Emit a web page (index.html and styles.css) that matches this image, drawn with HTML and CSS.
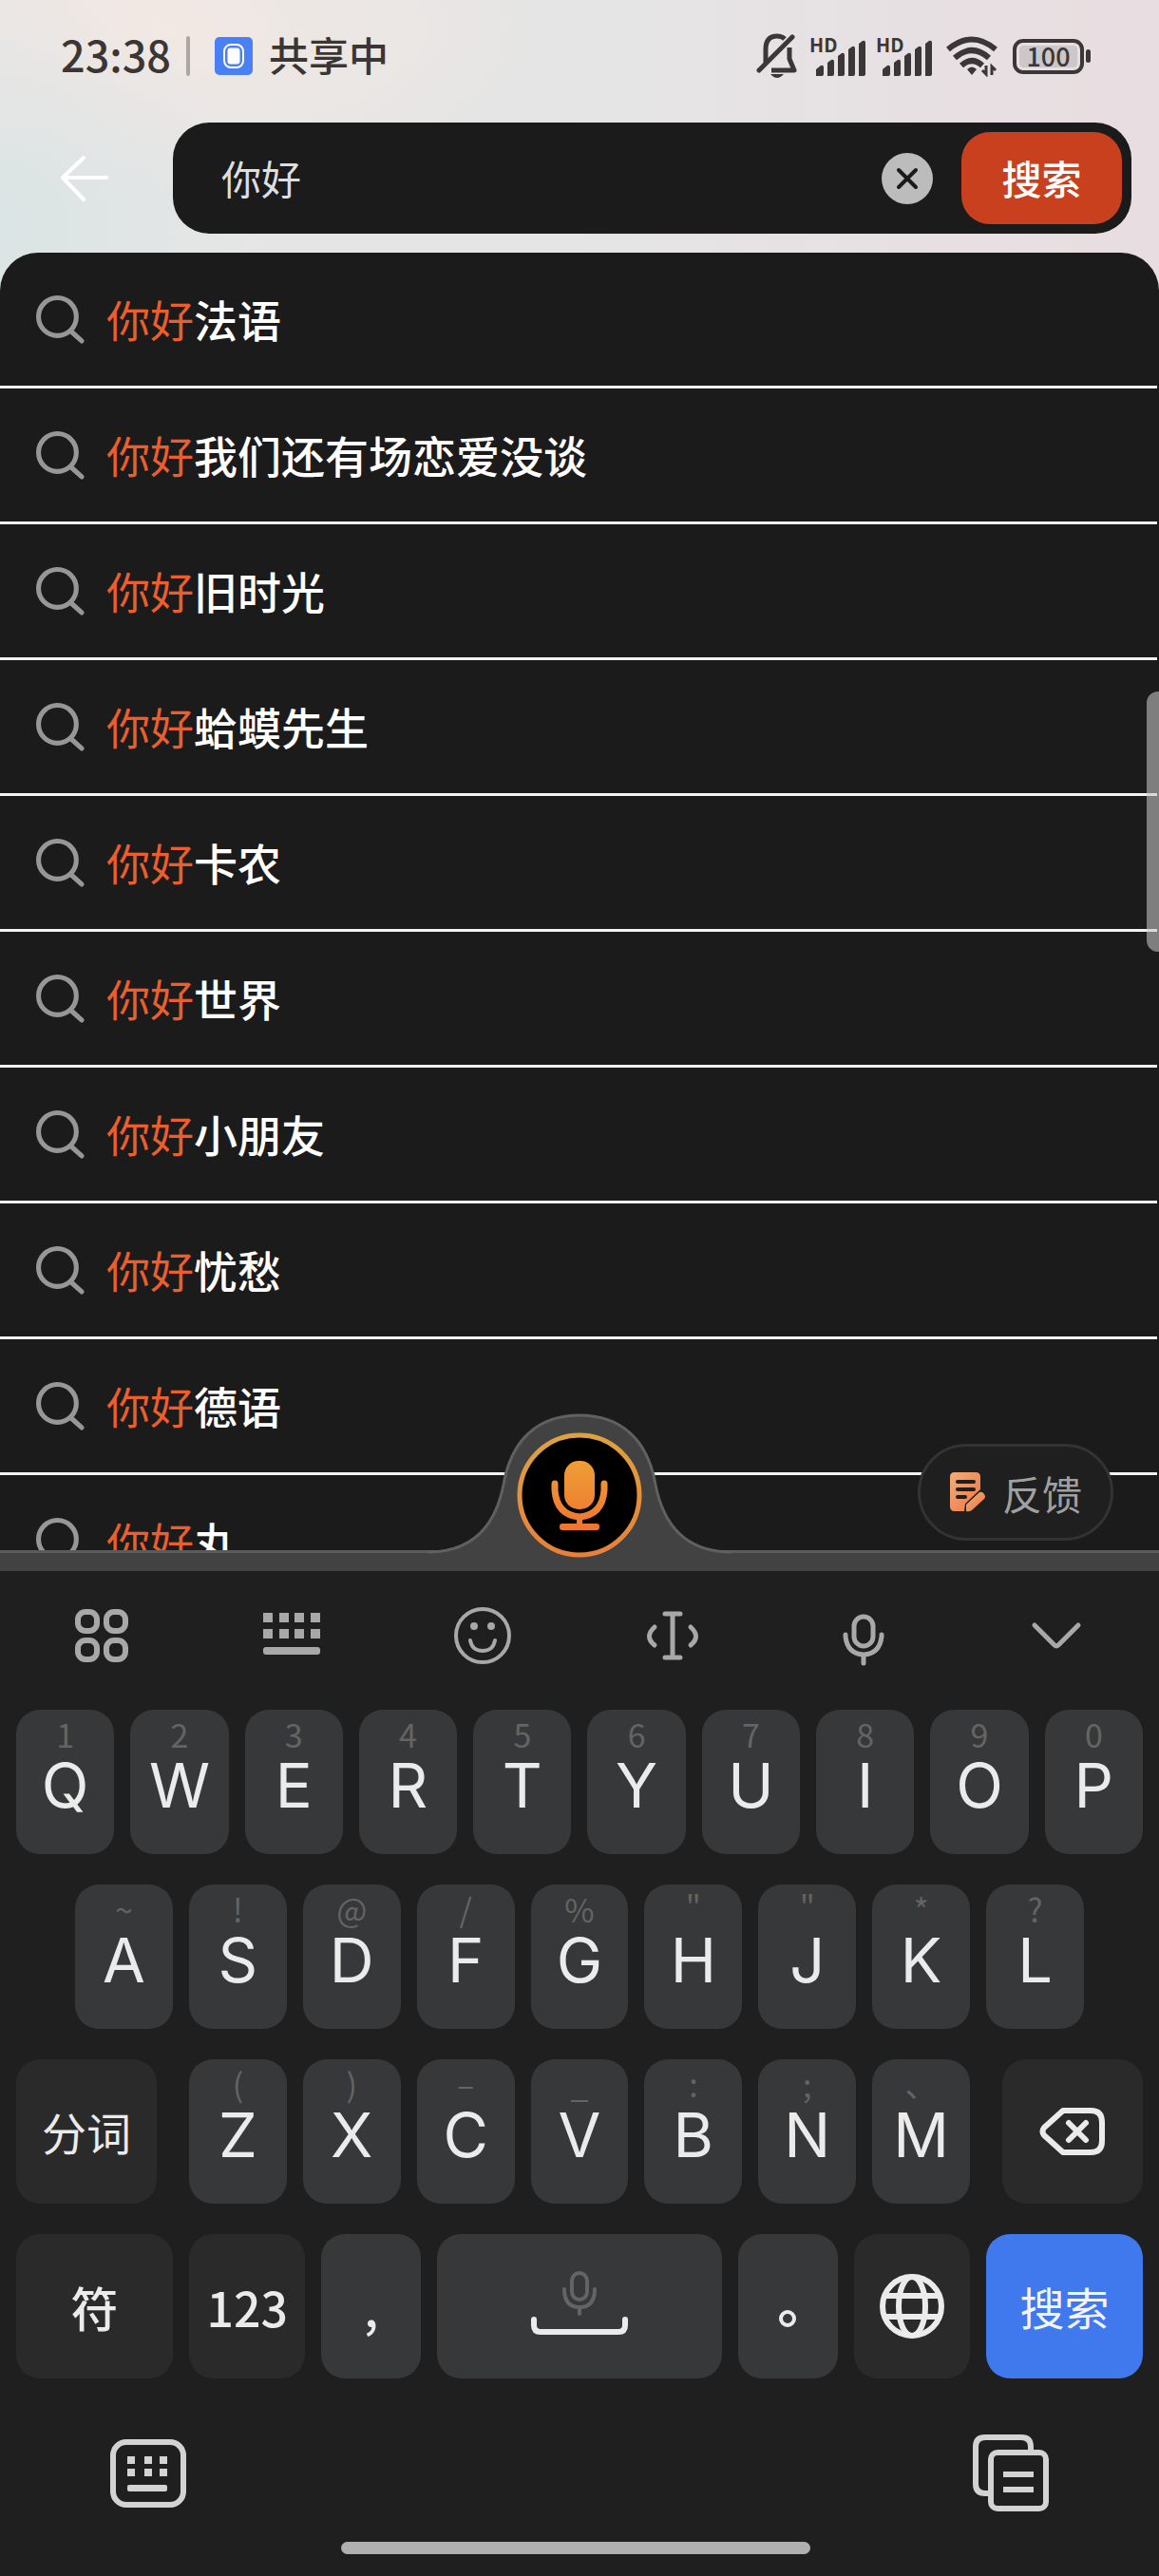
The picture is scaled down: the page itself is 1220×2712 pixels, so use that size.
FILE: index.html
```html
<!DOCTYPE html>
<html lang="zh-CN">
<head>
<meta charset="utf-8">
<meta name="viewport" content="width=device-width, initial-scale=1">
<title>搜索</title>
<link rel="stylesheet" href="styles.css">
</head>
<body>
<svg class="defs" aria-hidden="true">
  <defs>
    <symbol id="i-search" viewBox="0 0 50 50"><circle cx="22" cy="22" r="19.500" /><path d="M36 37l11 10"/></symbol>
    <symbol id="i-signal" viewBox="0 0 60 44">
      <path d="M7 43v-7l5-4q3-1 3 2v7q0 2-2 2zM19 43V29l4-3q3-1 3 2v13q0 2-2 2zM30 43V22l4-3q3-1 3 2v20q0 2-2 2zM41 43V15l4-3q3-1 3 2v27q0 2-2 2zM52 43V9l4-3q3-1 3 2v33q0 2-2 2z"/>
    </symbol>
    <linearGradient id="g-orange" x1="0" y1="0" x2="0" y2="1"><stop offset="0" stop-color="#dda23e"/><stop offset="1" stop-color="#e8803a"/></linearGradient>
    <linearGradient id="g-mic" gradientUnits="userSpaceOnUse" x1="0" y1="50" x2="0" y2="125"><stop offset="0" stop-color="#ee9f35"/><stop offset="1" stop-color="#ee7230"/></linearGradient>
    <linearGradient id="g-note" x1="0" y1="0" x2="1" y2="1"><stop offset="0" stop-color="#f2ae7a"/><stop offset="1" stop-color="#ee7440"/></linearGradient>
  </defs>
</svg>

<header class="status">
  <time class="clock">23:38</time>
  <span class="status-sep"></span>
  <svg class="share-icon" viewBox="0 0 40 40"><rect width="40" height="40" rx="5" fill="#4a80f5"/><rect x="10" y="8" width="20" height="24" rx="7" fill="none" stroke="#fff" stroke-width="2"/><rect x="13.500" y="11.500" width="13" height="17" rx="3" fill="#fff"/></svg>
  <span class="share-text">共享中</span>
  <div class="status-icons">
    <svg class="bell" viewBox="0 0 44 48"><path d="M10 31V17q0-14 12-14 5 0 8 3M35 15v12l5 12H16" fill="none" stroke="currentColor" stroke-width="5" stroke-linejoin="round"/><path d="M3 39L38 4" stroke="currentColor" stroke-width="5" stroke-linecap="round"/><path d="M15 43h14q-7 8-14 0z" fill="currentColor"/></svg>
    <span class="signal"><b>HD</b><svg viewBox="0 0 60 44"><use href="#i-signal"/></svg></span>
    <span class="signal"><b>HD</b><svg viewBox="0 0 60 44"><use href="#i-signal"/></svg></span>
    <svg class="wifi" viewBox="0 0 54 44"><g fill="none" stroke="currentColor" stroke-width="6"><path d="M2 15Q27-6 52 15"/><path d="M9 24Q27 8 45 24"/><path d="M16 32Q27 22 38 32"/></g><path d="M27 42l-5-6q5-5 10 0z" fill="currentColor"/><path d="M42 32v9l-4-4M48 42v-9l4 4" fill="none" stroke="currentColor" stroke-width="3"/></svg>
    <span class="battery"><span class="battery-body">100</span><span class="battery-tip"></span></span>
  </div>
</header>

<form class="searchbar" onsubmit="return false">
  <button class="back" type="button" aria-label="返回"><svg viewBox="0 0 50 50"><path d="M24 3L2 24l22 23M2 24h46"/></svg></button>
  <div class="field">
    <input class="query" type="text" value="你好" aria-label="搜索内容">
    <button class="clear" type="button" aria-label="清除"><svg viewBox="0 0 54 54"><path d="M18 18l18 18M36 18L18 36"/></svg></button>
    <button class="submit" type="submit">搜索</button>
  </div>
</form>

<main class="results">
  <ul class="list">
    <li><a href="#"><svg><use href="#i-search"/></svg><span><em>你好</em>法语</span></a></li>
    <li><a href="#"><svg><use href="#i-search"/></svg><span><em>你好</em>我们还有场恋爱没谈</span></a></li>
    <li><a href="#"><svg><use href="#i-search"/></svg><span><em>你好</em>旧时光</span></a></li>
    <li><a href="#"><svg><use href="#i-search"/></svg><span><em>你好</em>蛤蟆先生</span></a></li>
    <li><a href="#"><svg><use href="#i-search"/></svg><span><em>你好</em>卡农</span></a></li>
    <li><a href="#"><svg><use href="#i-search"/></svg><span><em>你好</em>世界</span></a></li>
    <li><a href="#"><svg><use href="#i-search"/></svg><span><em>你好</em>小朋友</span></a></li>
    <li><a href="#"><svg><use href="#i-search"/></svg><span><em>你好</em>忧愁</span></a></li>
    <li><a href="#"><svg><use href="#i-search"/></svg><span><em>你好</em>德语</span></a></li>
    <li><a href="#"><svg><use href="#i-search"/></svg><span><em>你好</em>丸</span></a></li>
  </ul>
  <span class="scroll-thumb"></span>
  <button class="feedback" type="button">
    <svg viewBox="0 0 40 44"><path d="M6 1h22q5 0 5 5v13L17 34l-1 8H6q-5 0-5-5V6q0-5 5-5z" fill="url(#g-note)"/><path d="M9 11h17M9 19h17M9 27h8" stroke="#1f1f1f" stroke-width="4" stroke-linecap="round"/><path d="M18 42v-7l14-13q3-1 5 2 2 3 0 5L24 41q-3 2-6 1z" fill="url(#g-note)"/></svg>
    反馈
  </button>
</main>

<div class="voicebar">
  <button class="voice" type="button" aria-label="语音">
    <svg viewBox="0 0 320 166">
      <path d="M0 146C50 146 72 116 80 75C88 28 116 2 160 2S232 28 240 75C248 116 270 146 320 146V166H0z" fill="#424242"/>
      <path d="M0 146C50 146 72 116 80 75C88 28 116 2 160 2S232 28 240 75C248 116 270 146 320 146" fill="none" stroke="#606060" stroke-width="3"/>
      <circle cx="160" cy="86" r="63" fill="#000" stroke="url(#g-orange)" stroke-width="5"/>
      <rect x="144" y="50" width="32" height="51" rx="15" fill="url(#g-mic)"/>
      <path d="M134 74v7q2 26 26 28 24-2 26-28v-7" fill="none" stroke="url(#g-mic)" stroke-width="7" stroke-linecap="round"/>
      <path d="M157 108h6v8h15q3 0 3 3v1q0 3-3 3h-36q-3 0-3-3v-1q0-3 3-3h15z" fill="url(#g-mic)"/>
    </svg>
  </button>
</div>

<section class="keyboard" aria-label="键盘">
  <div class="tools">
    <button type="button" aria-label="菜单"><svg viewBox="0 0 64 64"><g fill="none" stroke="currentColor" stroke-width="6"><rect x="7" y="7" width="20" height="20" rx="8"/><rect x="37" y="7" width="20" height="20" rx="8"/><rect x="7" y="37" width="20" height="20" rx="8"/><rect x="37" y="37" width="20" height="20" rx="8"/></g></svg></button>
    <button type="button" aria-label="键盘布局"><svg viewBox="0 0 64 64"><path d="M2 13h10M19 13h10M35 13h10M52 13h10M2 30h10M19 30h10M35 30h10M52 30h10" stroke="currentColor" stroke-width="10"/><rect x="2" y="44" width="60" height="8" rx="3" fill="currentColor"/></svg></button>
    <button type="button" aria-label="表情"><svg viewBox="0 0 64 64"><circle cx="32" cy="32" r="28" fill="none" stroke="currentColor" stroke-width="4"/><circle cx="23" cy="22" r="4" fill="currentColor"/><circle cx="41" cy="22" r="4" fill="currentColor"/><path d="M19 37q2 11 13 11t13-11" fill="none" stroke="currentColor" stroke-width="4" stroke-linecap="round"/></svg></button>
    <button type="button" aria-label="光标"><svg viewBox="0 0 64 64"><path d="M24 9h16M24 55h16M32 9v46M13 23q-11 10 0 19M51 23q11 10 0 19" fill="none" stroke="currentColor" stroke-width="5" stroke-linecap="round"/></svg></button>
    <button type="button" aria-label="语音输入"><svg viewBox="0 0 64 64"><rect x="22" y="12" width="20" height="31" rx="10" fill="none" stroke="currentColor" stroke-width="5"/><path d="M13 31v2q2 18 19 19 17-1 19-19v-2M32 52v9" fill="none" stroke="currentColor" stroke-width="5" stroke-linecap="round"/></svg></button>
    <button type="button" aria-label="收起"><svg viewBox="0 0 64 64"><path d="M12 21l21 21q2 2 4 0l21-21" fill="none" stroke="currentColor" stroke-width="5" stroke-linecap="round"/></svg></button>
  </div>

  <div class="keys">
    <div class="row">
      <button class="key"><small>1</small>Q</button><button class="key"><small>2</small>W</button><button class="key"><small>3</small>E</button><button class="key"><small>4</small>R</button><button class="key"><small>5</small>T</button><button class="key"><small>6</small>Y</button><button class="key"><small>7</small>U</button><button class="key"><small>8</small>I</button><button class="key"><small>9</small>O</button><button class="key"><small>0</small>P</button>
    </div>
    <div class="row row-inset">
      <button class="key"><small>~</small>A</button><button class="key"><small>!</small>S</button><button class="key"><small>@</small>D</button><button class="key"><small>/</small>F</button><button class="key"><small>%</small>G</button><button class="key"><small>"</small>H</button><button class="key"><small>"</small>J</button><button class="key"><small>*</small>K</button><button class="key"><small>?</small>L</button>
    </div>
    <div class="row row-wide">
      <button class="key key-side key-dark">分词</button>
      <div class="letters">
        <button class="key"><small>(</small>Z</button><button class="key"><small>)</small>X</button><button class="key"><small>–</small>C</button><button class="key"><small>_</small>V</button><button class="key"><small>:</small>B</button><button class="key"><small>;</small>N</button><button class="key"><small>、</small>M</button>
      </div>
      <button class="key key-side key-dark" aria-label="删除"><svg class="backspace" viewBox="0 0 72 54"><path d="M26 5h29q12 0 12 12v20q0 12-12 12H26L6 31q-3-4 0-8z"/><path d="M32 18l18 18M50 18L32 36"/></svg></button>
    </div>
    <div class="row row-bottom">
      <button class="key key-dark">符</button>
      <button class="key key-dark">123</button>
      <button class="key key-mark">,</button>
      <button class="key key-space" aria-label="空格"><svg viewBox="0 0 104 76"><g fill="none" stroke-linecap="round"><g stroke="#636464" stroke-width="4"><rect x="44" y="3" width="16" height="28" rx="8"/><path d="M36 20q0 19 16 19t16-19M52 39v7"/></g><path d="M4 52v6q0 7 7 7h82q7 0 7-7v-6" stroke="#ebebeb" stroke-width="6"/></g></svg></button>
      <button class="key key-mark" aria-label="句号"><svg class="stop" viewBox="0 0 18 18"><circle cx="9" cy="9" r="7"/></svg></button>
      <button class="key key-dark" aria-label="切换语言"><svg class="globe" viewBox="0 0 68 68"><circle cx="34" cy="34" r="31"/><ellipse cx="34" cy="34" rx="14" ry="31"/><path d="M7 23h54M7 45h54"/></svg></button>
      <button class="key key-enter">搜索</button>
    </div>
  </div>

  <div class="dock">
    <button type="button" aria-label="切换键盘"><svg viewBox="0 0 84 84"><rect x="5" y="9" width="74" height="66" rx="14" fill="none" stroke="currentColor" stroke-width="6"/><path d="M20 28h8M38 28h8M54 28h8M20 41h8M38 41h8M54 41h8" stroke="currentColor" stroke-width="8"/><rect x="20" y="54" width="42" height="7" rx="2" fill="currentColor"/></svg></button>
    <button type="button" aria-label="剪贴板"><svg viewBox="0 0 84 84"><g fill="none" stroke="currentColor" stroke-width="6"><path d="M18 63h-3q-10 0-10-10V14Q5 4 15 4h38q10 0 10 10v4"/><rect x="21" y="20" width="58" height="59" rx="7"/><path d="M34 43h32M34 59h32"/></g></svg></button>
  </div>
  <div class="home"></div>
</section>
</body>
</html>
```
FILE: styles.css
```css
* { box-sizing: border-box; }

body {
  margin: 0;
  height: 100vh;
  display: flex;
  flex-direction: column;
  overflow: hidden;
  color: #fff;
  font-family: "Noto Sans CJK SC", sans-serif;
  background:
    radial-gradient(circle at 0 240px, #dbe4e4 0, rgba(222, 229, 231, 0) 260px),
    radial-gradient(ellipse 420px 170px at 160px 30px, #f2e8e3 0, rgba(242, 232, 227, 0) 100%),
    linear-gradient(90deg, #e5e6e6 0, #e5e5e5 50%, #e7e0e2 80%, #e8dde0 100%);
}

button {
  margin: 0;
  padding: 0;
  border: 0;
  background: none;
  color: inherit;
  font: inherit;
}

svg { display: block; }
.defs { position: absolute; width: 0; height: 0; }

/* Status bar */
.status {
  flex: none;
  display: flex;
  align-items: center;
  height: 118px;
  padding: 0 72px 0 64px;
  color: #3b3633;
}
.clock { font-size: 45px; font-weight: 500; line-height: 60px; padding-bottom: 4px; }
.status-sep { width: 4px; height: 42px; margin: 0 26px 0 16px; border-radius: 2px; background: #aca5a3; }
.share-icon { width: 40px; height: 40px; margin-right: 17px; }
.share-text { font-size: 42px; font-weight: 500; line-height: 60px; padding-bottom: 4px; }
.status-icons { display: flex; align-items: center; margin-left: auto; color: #3b3637; }
.bell { width: 44px; height: 48px; margin-right: 12px; }
.signal { position: relative; width: 60px; height: 44px; margin-right: 10px; }
.signal svg { width: 60px; height: 44px; fill: currentColor; }
.signal b { position: absolute; top: 0; left: 0; font: 600 20px/20px "Noto Sans CJK SC", sans-serif; }
.wifi { width: 54px; height: 44px; margin: 0 16px 0 4px; }
.battery { display: flex; align-items: center; gap: 2px; }
.battery-body {
  width: 75px; height: 37px;
  border: 4px solid #3b3637;
  border-radius: 11px;
  padding: 3px;
  background: #cdc7ca content-box;
  font-size: 27px; font-weight: 500; line-height: 22px;
  text-align: center;
}
.battery-tip { width: 5px; height: 14px; border-radius: 3px; background: #3b3637; }

/* Search bar */
.searchbar {
  flex: none;
  display: flex;
  align-items: center;
  padding: 11px 29px 20px 64px;
}
.back { width: 118px; }
.back svg { width: 50px; height: 54px; fill: none; stroke: #fff; stroke-width: 4; stroke-linecap: round; stroke-linejoin: round; }
.field {
  flex: 1;
  display: flex;
  align-items: center;
  height: 117px;
  padding: 10px;
  border-radius: 38px;
  background: #1b1b1b;
}
.query {
  flex: 1;
  min-width: 0;
  padding: 0 0 2px 41px;
  border: 0;
  outline: 0;
  background: none;
  color: #dedede;
  font: 42px/60px "Noto Sans CJK SC", sans-serif;
}
.clear { width: 54px; height: 54px; margin-right: 30px; border-radius: 50%; background: #bcbcbc; }
.clear svg { fill: none; stroke: #1b1b1b; stroke-width: 4; stroke-linecap: round; }
.submit {
  width: 169px; height: 97px;
  padding-bottom: 2px;
  border-radius: 30px;
  background: #c9401f;
  font-size: 42px; font-weight: 500;
}

/* Suggestions */
.results {
  position: relative;
  flex: 1;
  min-height: 0;
  border-radius: 40px 40px 0 0;
  background: #1b1b1b;
}
.list { height: 100%; margin: 0; padding: 0 2px 0 0; overflow: hidden; list-style: none; }
.list li { height: 143px; border-bottom: 3px solid #f2f2f2; }
.list a {
  display: flex;
  align-items: center;
  gap: 23px;
  height: 100%;
  padding-left: 38px;
  color: #fff;
  font-size: 46px;
  font-weight: 500;
  text-decoration: none;
}
.list span { padding-bottom: 2px; }
.list svg { width: 51px; height: 51px; fill: none; stroke: #979797; stroke-width: 5; stroke-linecap: round; }
.list em { color: #ea5f2c; font-style: normal; font-weight: 400; }
.scroll-thumb {
  position: absolute;
  top: 462px; right: 0;
  width: 13px; height: 274px;
  border-radius: 12px 0 0 12px;
  background: rgba(198, 198, 198, .58);
}
.feedback {
  position: absolute;
  right: 48px; bottom: 10px;
  display: flex;
  align-items: center;
  justify-content: center;
  gap: 16px;
  width: 206px; height: 102px;
  border: 3px solid #333;
  border-radius: 51px;
  background: #1f1f1f;
  color: #a0a0a0;
  font-size: 42px;
}
.feedback svg { width: 40px; height: 44px; }

/* Voice strip above the keyboard */
.voicebar {
  position: relative;
  flex: none;
  height: 22px;
  border-top: 3px solid #5c5c5c;
  background: #424242;
}
.voice { position: absolute; left: 50%; bottom: 0; width: 320px; margin-left: -160px; }
.voice svg { width: 320px; height: 166px; }

/* Keyboard */
.keyboard { flex: none; background: #1f1f1f; }
.tools {
  display: flex;
  justify-content: space-between;
  align-items: center;
  height: 146px;
  padding: 0 79px 10px 75px;
  color: #a8a8a8;
}
.tools svg { width: 64px; height: 64px; }
.keys { display: flex; flex-direction: column; gap: 32px; padding: 0 17px; }
.row { display: flex; gap: 17px; }
.row-inset { padding: 0 62px; }
.row-wide { gap: 34px; }
.row-bottom { display: grid; grid-template-columns: 165fr 122fr 105fr 299fr 105fr 122fr 165fr; }
.letters { flex: 1; display: flex; gap: 17px; }
.key {
  flex: 1 1 0;
  min-width: 0;
  height: 152px;
  display: flex;
  flex-direction: column;
  align-items: center;
  padding-top: 8px;
  border-radius: 25px;
  background: #373839;
  color: #ebebeb;
  font: 400 65px/72px Inter, sans-serif;
}
.key small {
  height: 36px;
  color: #636464;
  font: 34px/36px "Noto Sans CJK SC", sans-serif;
}
.key-side { flex: 0 0 148px; }
.key-dark, .key-enter, .key-mark, .key-space {
  justify-content: center;
  padding: 0;
  font: 500 50px/60px "Noto Sans CJK SC", sans-serif;
}
.key-dark { background: #2a2a2a; }
.key-enter { background: #4078ee; color: #f2f5ff; }
.key-side, .key-enter { font-size: 47px; font-weight: 400; }
.key-space svg { width: 104px; height: 76px; }
.backspace { width: 72px; height: 54px; }
.globe { width: 68px; height: 68px; }
.stop { width: 18px; height: 18px; margin-top: 26px; }
.backspace, .globe, .stop { fill: none; stroke: #ebebeb; stroke-width: 6; stroke-linecap: round; stroke-linejoin: round; }
.stop { stroke-width: 4; }

.dock {
  display: flex;
  justify-content: space-between;
  padding: 58px 114px 30px;
  color: #d3d3d3;
}
.dock svg { width: 84px; height: 84px; }
.home { width: 494px; height: 13px; margin: 0 auto 23px; border-radius: 7px; background: #b0b0b0; transform: translateX(-4px); }
```
